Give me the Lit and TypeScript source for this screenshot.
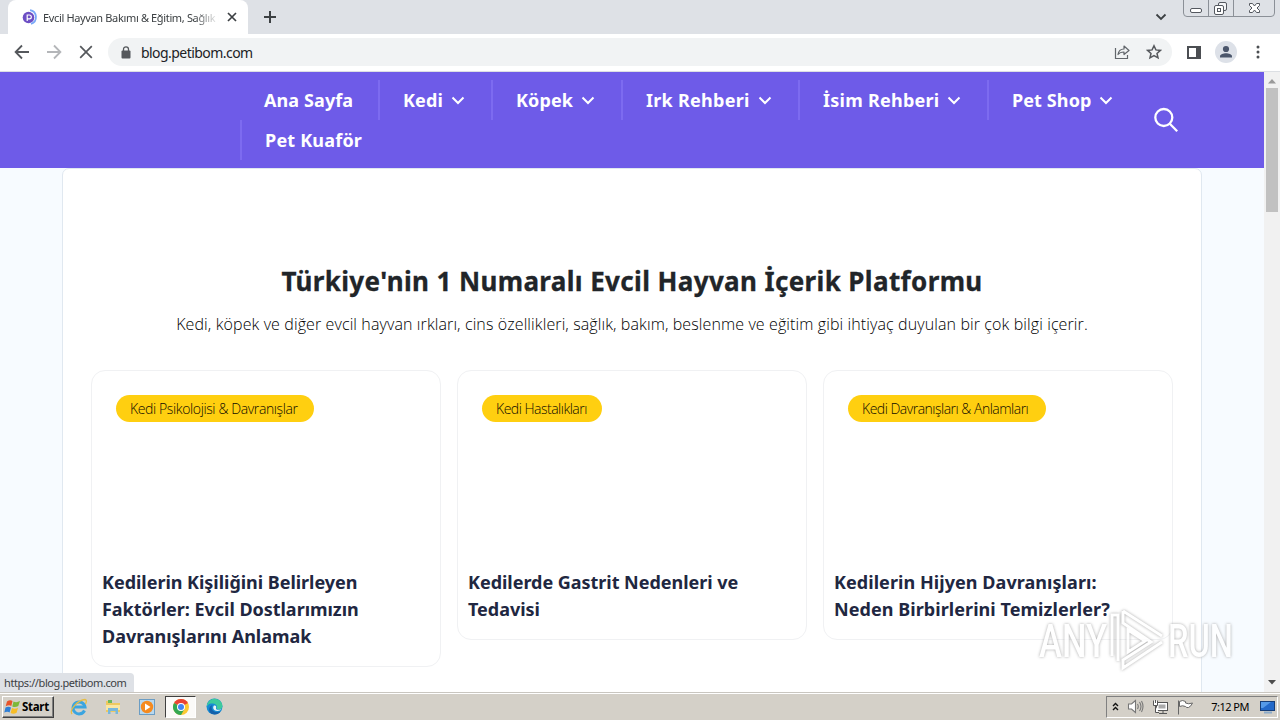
import { LitElement, html, css, svg } from 'lit';
import { customElement } from 'lit/decorators.js';

interface NavItem { label: string; width: number; menu?: boolean; spacing: number }
interface Post { tag: string; pill: number; spacing: number; tracking: number; lines: string[] }

const NAV: NavItem[] = [
  { label: 'Ana Sayfa',    width: 138, spacing: 0.1 },
  { label: 'Kedi',         width: 113, spacing: 0.15, menu: true },
  { label: 'Köpek',        width: 130, spacing: 0.1, menu: true },
  { label: 'Irk Rehberi',  width: 177, spacing: 0.27, menu: true },
  { label: 'İsim Rehberi', width: 189, spacing: 0.25, menu: true },
  { label: 'Pet Shop',     width: 150, spacing: 0.1, menu: true },
  { label: 'Pet Kuaför',   width: 150, spacing: 0.2 },
];

const POSTS: Post[] = [
  { tag: 'Kedi Psikolojisi & Davranışlar', pill: 198, spacing: -0.38, tracking: -0.03, lines: ['Kedilerin Kişiliğini Belirleyen', 'Faktörler: Evcil Dostlarımızın', 'Davranışlarını Anlamak'] },
  { tag: 'Kedi Hastalıkları', pill: 120, spacing: -0.5, tracking: -0.03, lines: ['Kedilerde Gastrit Nedenleri ve', 'Tedavisi'] },
  { tag: 'Kedi Davranışları & Anlamları', pill: 198, spacing: -0.5, tracking: 0.06, lines: ['Kedilerin Hijyen Davranışları:', 'Neden Birbirlerini Temizlerler?'] },
];

@customElement('browser-chrome')
export class BrowserChrome extends LitElement {
  render() {
    return html`
      <div class="strip">
        <div class="tab">
          <svg width="16" height="16" viewBox="0 0 16 16">
            <circle cx="6.500" cy="8.500" r="5.800" fill="#6d4fc4"/>
            <path d="M8 1.200a7 7 0 0 1 1 13.600" fill="none" stroke="#78a8f8" stroke-width="1.800"/>
            <path d="M5.200 12V6h2.200a1.900 1.900 0 0 1 0 3.800H5.600" fill="none" stroke="#fff" stroke-width="1.200"/>
          </svg>
          <span class="title">Evcil Hayvan Bakımı &amp; Eğitim, Sağlık R</span>
          <svg class="close" width="10" height="10" viewBox="0 0 10 10"><path d="M1 1l8 8M9 1L1 9" stroke="#3c4043" stroke-width="1.700"/></svg>
        </div>
        <svg class="plus" width="12" height="12" viewBox="0 0 12 12"><path d="M6 0v12M0 6h12" stroke="#3c4043" stroke-width="2"/></svg>
        <svg class="chevron" width="12" height="8" viewBox="0 0 12 8"><path d="M1.500 1.500L6 6l4.500-4.500" fill="none" stroke="#3c4043" stroke-width="1.800"/></svg>
        <div class="controls">
          <svg width="92" height="17" viewBox="0 0 92 17" fill="none">
            <path d="M.5 0v13q0 3.500 3.500 3.500h84q3.500 0 3.500-3.500V0M25.500 0v16M50.500 0v16" stroke="#8b9097"/>
            <rect x="7.500" y="8.500" width="11" height="4" rx="1.500" fill="#fff" stroke="#54585f"/>
            <rect x="35.500" y="2.500" width="8" height="8" rx="1.500" fill="#f4f5f7" stroke="#54585f"/>
            <rect x="31.500" y="5.500" width="9" height="9" rx="1.500" fill="#fff" stroke="#54585f"/>
            <rect x="34.500" y="8.500" width="3" height="3" stroke="#54585f"/>
            <path d="M66.500 3.500h3l2 2.500 2-2.500h3v2l-2.500 2.500 2.500 2.500v2h-3l-2-2.500-2 2.500h-3v-2l2.500-2.500-2.500-2.500z" fill="#fff" stroke="#54585f"/>
          </svg>
        </div>
      </div>
      <div class="toolbar">
        <svg width="16" height="16" viewBox="0 0 16 16" fill="none" stroke="#55585c" stroke-width="1.800"><path d="M15 8H2M8 1.500L1.600 8 8 14.500"/></svg>
        <svg width="16" height="16" viewBox="0 0 16 16" fill="none" stroke="#b4b6b9" stroke-width="1.800"><path d="M1 8h13M8 1.500L14.400 8 8 14.500"/></svg>
        <svg width="16" height="16" viewBox="0 0 16 16" stroke="#55585c" stroke-width="1.700"><path d="M2.200 2.200l11.600 11.600M13.800 2.200L2.200 13.800"/></svg>
        <div class="omnibox">
          <svg width="10" height="13" viewBox="0 0 10 13"><rect x=".5" y="4.500" width="9" height="8" rx="1" fill="#55585c"/><path d="M2.500 5V3.300a2.500 2.500 0 0 1 5 0V5" fill="none" stroke="#55585c" stroke-width="1.300"/></svg>
          <span class="url">blog.petibom.com</span>
          <svg width="16" height="16" viewBox="0 0 16 16" fill="none" stroke="#62666b" stroke-width="1.200"><path d="M1.500 4v10.500h12V11"/><path d="M4 10.500C4.500 7 6.500 5 10 5V2l5 4.500-5 4V8C7.500 8 5.500 8.500 4 10.500z" stroke-linejoin="round"/></svg>
          <svg width="16" height="16" viewBox="0 0 16 16" fill="none" stroke="#55585c" stroke-width="1.500"><path d="M8 1.800l1.900 4.100 4.500.5-3.400 3 1 4.400L8 11.500l-4 2.300 1-4.400-3.400-3 4.500-.5z"/></svg>
        </div>
        <svg class="panel" width="14" height="13" viewBox="0 0 14 13"><path d="M1 1h12v11H1z" fill="none" stroke="#4b4e52" stroke-width="2"/><path d="M9 0h5v13H9z" fill="#4b4e52"/></svg>
        <svg class="avatar" width="22" height="22" viewBox="0 0 22 22"><circle cx="11" cy="11" r="11" fill="#dde1e8"/><circle cx="11" cy="8" r="3.100" fill="#4b566b"/><path d="M5 16.500v-1.200c0-2 3.500-3 6-3s6 1 6 3v1.200z" fill="#4b566b"/></svg>
        <svg class="dots" width="4" height="14" viewBox="0 0 4 14" fill="#4b4e52"><circle cx="2" cy="2" r="1.500"/><circle cx="2" cy="7" r="1.500"/><circle cx="2" cy="12" r="1.500"/></svg>
      </div>
    `;
  }

  static styles = css`
    :host { display: block; height: 72px; font-family: 'Noto Sans', sans-serif; }
    svg { display: block; flex: none; }
    .strip {
      display: flex;
      align-items: center;
      height: 34px;
      padding-left: 8px;
      background: #dee1e6;
    }
    .tab {
      display: flex;
      align-items: center;
      width: 240px;
      height: 34px;
      padding: 0 11px 0 14px;
      box-sizing: border-box;
      border-radius: 8px 8px 0 0;
      background: #fff;
    }
    .title {
      flex: 1;
      min-width: 0;
      margin: 0 8px 0 5px;
      white-space: nowrap;
      font-size: 11px;
      letter-spacing: -0.350px;
      color: #3c4043;
      -webkit-mask-image: linear-gradient(to right, #000 86%, transparent);
    }
    .plus { margin-left: 16px; }
    .chevron { margin-left: auto; }
    .controls { align-self: flex-start; margin: 0 5px 0 16px; }
    .toolbar {
      display: flex;
      align-items: center;
      height: 38px;
      padding: 0 20px 1px 14px;
      box-sizing: border-box;
      border-bottom: 1px solid #dcdfe3;
      background: #fff;
    }
    .toolbar > svg + svg { margin-left: 16px; }
    .omnibox {
      flex: 1;
      display: flex;
      align-items: center;
      gap: 16px;
      height: 28px;
      margin-left: 14px;
      padding: 0 10px 0 13px;
      border-radius: 14px;
      background: #f1f3f4;
    }
    .url {
      flex: 1;
      margin-left: -6px;
      padding-top: 1px;
      font-size: 14px;
      letter-spacing: -0.550px;
      color: #202124;
    }
    .toolbar .panel { margin-left: 15px; }
    .toolbar .avatar { margin-left: 14px; }
    .toolbar .dots { margin-left: 19px; }
  `;
}

@customElement('blog-page')
export class BlogPage extends LitElement {
  render() {
    return html`
      <header>
        <nav>
          ${NAV.map(n => html`
            <a style="width:${n.width}px;letter-spacing:${n.spacing}px">${n.label}
              ${n.menu ? html`<svg width="14" height="9" viewBox="0 0 14 9"><path d="M1.500 1.500L7 7l5.500-5.500" fill="none" stroke="#fff" stroke-width="2"/></svg>` : ''}
            </a>
          `)}
        </nav>
        <svg class="search" width="26" height="26" viewBox="0 0 26 26" fill="none" stroke="#fff" stroke-width="2.300"><circle cx="10.800" cy="10.500" r="8.500"/><path d="M16.800 16.800l7.400 7.400"/></svg>
      </header>
      <main>
        <h1>Türkiye'nin 1 Numaralı Evcil Hayvan İçerik Platformu</h1>
        <p>Kedi, köpek ve diğer evcil hayvan ırkları, cins özellikleri, sağlık, bakım, beslenme ve eğitim gibi ihtiyaç duyulan bir çok bilgi içerir.</p>
        <div class="grid">
          ${POSTS.map(p => html`
            <article>
              <div class="cover"><span class="pill" style="width:${p.pill}px;letter-spacing:${p.spacing}px">${p.tag}</span></div>
              <h2 style="letter-spacing:${p.tracking}px">${p.lines.map(l => html`<span>${l}</span>`)}</h2>
            </article>
          `)}
        </div>
      </main>
    `;
  }

  static styles = css`
    :host {
      display: block;
      overflow: hidden;
      background: #f7fbff;
      font-family: 'Noto Sans', sans-serif;
    }
    header {
      display: flex;
      align-items: center;
      height: 96px;
      padding: 0 85px 0 240px;
      background: #6e5be8;
    }
    nav {
      flex: 1;
      display: flex;
      flex-wrap: wrap;
    }
    a {
      display: flex;
      align-items: center;
      gap: 8px;
      height: 40px;
      padding-left: 23px;
      box-sizing: border-box;
      border-left: 2px solid #7d6bf0;
      color: #fff;
      font-size: 18px;
      font-weight: 700;
      white-space: nowrap;
    }
    a:first-child { border-color: transparent; padding-left: 22px; }
    main {
      width: 1140px;
      height: 560px;
      margin: 0 auto;
      padding: 91px 28px 0;
      box-sizing: border-box;
      border: 1px solid #e0e8f0;
      border-radius: 7px;
      background: #fff;
      text-align: center;
    }
    h1 {
      margin: 0;
      font-size: 26px;
      line-height: 43px;
      font-weight: 700;
      letter-spacing: 0.370px;
      white-space: nowrap;
      color: #212529;
      -webkit-text-stroke: 0.300px #212529;
    }
    p {
      margin: 9px 0 0;
      font-family: 'Open Sans', 'Noto Sans', sans-serif;
      font-size: 16px;
      line-height: 24px;
      font-weight: 300;
      letter-spacing: 0.110px;
      white-space: nowrap;
      color: #000;
    }
    .grid {
      display: grid;
      grid-template-columns: repeat(3, 350px);
      gap: 16px;
      align-items: start;
      margin-top: 34px;
      text-align: left;
    }
    article {
      padding: 0 10px 16px;
      border: 1px solid #f0f1f3;
      border-radius: 14px;
    }
    .cover { height: 198px; padding: 24px 14px 0; box-sizing: border-box; }
    .pill {
      display: block;
      padding-left: 14px;
      box-sizing: border-box;
      border-radius: 14px;
      background: #ffcf10;
      color: #100c00;
      font-family: 'Open Sans', 'Noto Sans', sans-serif;
      font-size: 14px;
      font-weight: 300;
      line-height: 27px;
      white-space: nowrap;
    }
    h2 {
      margin: 0;
      font-size: 18px;
      line-height: 27px;
      color: #212741;
      white-space: nowrap;
    }
    h2 span { display: block; }
  `;
}

@customElement('task-bar')
export class TaskBar extends LitElement {
  render() {
    return html`
      <div class="start">
        <svg width="17" height="16" viewBox="0 0 17 16">
          <path d="M3 2.500q3-2 5.500-.5L7.300 7Q5 5.500 1.700 7.300z" fill="#e8542a"/>
          <path d="M9.500 2.500q3 1.500 6.500-.5l-1.700 5q-3 1.800-6 .5z" fill="#7db83a"/>
          <path d="M1.500 8.500Q4.500 7 7 8.500L5.600 13.500Q3.500 12 .3 13.500z" fill="#2f7fd6"/>
          <path d="M8 9q3 1.500 6-.3l-1.400 5q-3 2-6 .3z" fill="#f7bd26"/>
        </svg>
        Start
      </div>
      <div class="apps">
        <svg width="18" height="18" viewBox="0 0 18 18" fill="none">
          <path d="M14.500 12.500A6 6 0 1 1 15 9H4" stroke="#3ba5e0" stroke-width="3"/>
          <path d="M2 16C-1 12 8 2 15 1.500c2 .3 1.500 2.500.5 4.500" stroke="#e6bd45" stroke-width="1.300"/>
        </svg>
        <svg width="18" height="18" viewBox="0 0 18 18">
          <path d="M2 3h5l1 2h8v9H2z" fill="#eec95f"/><path d="M4 2h4v3H4z" fill="#69b85a"/><path d="M2 7h14v5H2z" fill="#f9e7a3"/>
          <path d="M4 16v-6h10v6h-2.500v-3h-5v3z" fill="#78b8dc"/>
        </svg>
        <svg width="18" height="18" viewBox="0 0 18 18">
          <rect x="1.500" y="1.500" width="15" height="15" fill="#b8d8ef" stroke="#6b9dc4"/>
          <circle cx="9" cy="9" r="6.200" fill="#f58a1f"/><path d="M7 5.500l5.500 3.500L7 12.500z" fill="#fff"/>
        </svg>
        <div class="active">
          <svg width="16" height="16" viewBox="0 0 16 16">
            <circle cx="8" cy="8" r="8" fill="#fcc934"/>
            <path d="M8 8L1.070 4A8 8 0 0 1 14.930 4z" fill="#ea4335"/>
            <path d="M8 8L1.070 4A8 8 0 0 0 8 16l3.500-6z" fill="#34a853"/>
            <circle cx="8" cy="8" r="4" fill="#fff"/><circle cx="8" cy="8" r="3" fill="#4285f4"/>
          </svg>
        </div>
        <svg width="17" height="17" viewBox="0 0 17 17">
          <circle cx="8.500" cy="8.500" r="8" fill="#168bd4"/>
          <path d="M1 6.500C3 1 8-.5 12 1.500c4 2 5.500 6.500 3.500 9-1.500 1.500-5 1-5-.5 1.500-2-1-4.500-4-4.500-2.500 0-4.500.5-5.500 3z" fill="#3dca9c"/>
          <path d="M5.500 9c0 4 4 6 9 4.500-2 3-7 4-10 1.500C2 12.500 3 8 6.500 7z" fill="#1460aa"/>
          <path d="M8 7.500c2-.5 2.500 1 2 2.500-.5 2 3 2.500 5.500 1-1.500 2.500-7 2.500-8 0-.5-1.500-.3-2.500.5-3.500z" fill="#e9f5f7"/>
        </svg>
      </div>
      <div class="tray">
        <svg width="7" height="9" viewBox="0 0 7 9" fill="none" stroke="#111" stroke-width="1.400"><path d="M1 4l2.500-2.500L6 4M1 8l2.500-2.500L6 8"/></svg>
        <svg width="17" height="15" viewBox="0 0 17 15" fill="none" stroke="#777" stroke-width="1.100"><path d="M1.500 5h3l4-3.500v12L4.500 10h-3z" fill="#fff"/><path d="M10.500 5q1.500 2.500 0 5M12.500 3q3 4.500 0 9M14.500 2q3 5.500 0 11"/></svg>
        <svg width="17" height="16" viewBox="0 0 17 16" fill="#fff" stroke="#555"><rect x="4.500" y="3.500" width="11" height="8"/><rect x="6.500" y="5.500" width="7" height="4" fill="#aaa" stroke="none"/><path d="M7 14.500h8M11 12v2M3.500 7v6.500H7"/><path d="M1.500 1.500v5h4v-5M3.500 1v3"/></svg>
        <svg width="17" height="16" viewBox="0 0 17 16" fill="#fff" stroke="#666"><path d="M1.500 15.500V1.500M2.500 2.500q3-2 6 0v1.500q3 1.500 7 0-1.500 3.500-4 4.500-2 .5-3-1-3-1.500-6 0z"/></svg>
        <span class="clock">7:12 PM</span>
        <svg width="16" height="14" viewBox="0 0 16 14"><rect x=".5" y="1.500" width="14" height="9" fill="#2369c9" stroke="#163e78"/><path d="M1 2h10L3 8H1z" fill="#559ae8"/><path d="M4 12.500h8" stroke="#8cabc9" stroke-width="2"/></svg>
      </div>
    `;
  }

  static styles = css`
    :host {
      display: flex;
      align-items: center;
      height: 28px;
      box-sizing: border-box;
      padding: 2px 2px 2px;
      border-top: 1px solid #c9c6c0;
      box-shadow: inset 0 1px #fff;
      background: #d4d0c8;
      font-family: 'Noto Sans', sans-serif;
      font-size: 11px;
      color: #000;
    }
    svg { display: block; flex: none; }
    .start {
      display: flex;
      align-items: center;
      gap: 1px;
      width: 52px;
      height: 22px;
      padding-left: 1px;
      box-sizing: border-box;
      border: 1px solid;
      border-color: #fff #404040 #404040 #fff;
      box-shadow: inset -1px -1px #808080;
      font-weight: 700;
      font-size: 11.500px;
      letter-spacing: -0.300px;
    }
    .apps { display: flex; align-items: center; gap: 16px; margin-left: 16px; }
    .active {
      display: flex;
      align-items: center;
      justify-content: center;
      width: 31px;
      height: 22px;
      margin: 0 -6px 0 -7px;
      box-sizing: border-box;
      border: 1px solid;
      border-color: #404040 #fff #fff #404040;
      background: #fbfaf8;
    }
    .tray {
      display: flex;
      align-items: center;
      width: 172px;
      height: 22px;
      margin-left: auto;
      padding: 0 1px 0 5px;
      gap: 8px;
      box-sizing: border-box;
      border: 1px solid;
      border-color: #808080 #fff #fff #808080;
    }
    .clock {
      flex: 1;
      padding-right: 3px;
      text-align: right;
      white-space: nowrap;
      font-size: 11px;
      letter-spacing: -0.500px;
    }
  `;
}

@customElement('app-root')
export class AppRoot extends LitElement {
  private _mark() {
    const shape = svg`
      <text x="3" y="50" textLength="68" lengthAdjust="spacingAndGlyphs">ANY</text>
      <text x="132" y="50" textLength="65" lengthAdjust="spacingAndGlyphs">RUN</text>
      <path d="M76 49V8h6v46M87 4l39 25M87 4v12l28 19-28 18v8l39-26M92 23v22l17-11z" fill="none" stroke="#fff" stroke-width="3"/>
    `;
    return html`<svg class="mark" width="200" height="68" viewBox="0 0 200 68">${shape}</svg>`;
  }

  render() {
    return html`
      <browser-chrome></browser-chrome>
      <div class="view">
        <blog-page></blog-page>
        <div class="scrollbar">
          <svg width="8" height="5" viewBox="0 0 8 5"><path d="M4 0l4 4.500H0z" fill="#9a9a9a"/></svg>
          <div class="thumb"></div>
          <svg class="down" width="8" height="5" viewBox="0 0 8 5"><path d="M4 4.500L0 0h8z" fill="#4c4c4c"/></svg>
        </div>
        <div class="status">https://blog.petibom.com</div>
        ${this._mark()}
      </div>
      <task-bar></task-bar>
    `;
  }

  static styles = css`
    :host {
      display: flex;
      flex-direction: column;
      width: 1280px;
      height: 720px;
      overflow: hidden;
      font-family: 'Noto Sans', sans-serif;
    }
    .view { position: relative; display: flex; height: 620px; }
    blog-page { flex: 1; }
    .scrollbar {
      display: flex;
      flex-direction: column;
      align-items: center;
      width: 16px;
      padding: 7px 0;
      box-sizing: border-box;
      background: #f1f1f1;
    }
    .thumb { width: 12px; height: 124px; margin-top: 4px; background: #c1c1c1; }
    .down { margin-top: auto; }
    .status {
      position: absolute;
      left: 0;
      bottom: 0;
      width: 134px;
      height: 19px;
      padding-left: 4px;
      box-sizing: border-box;
      border-radius: 0 4px 0 0;
      background: #dee1e6;
      color: #3c4043;
      font-size: 11px;
      line-height: 20px;
      letter-spacing: -0.420px;
      white-space: nowrap;
    }
    .mark {
      position: absolute;
      left: 1036px;
      top: 535px;
      overflow: visible;
      fill: #fff;
      opacity: 0.850;
      filter: drop-shadow(0 0 1.500px #999);
      font: 500 46px Roboto, sans-serif;
    }
  `;
}
